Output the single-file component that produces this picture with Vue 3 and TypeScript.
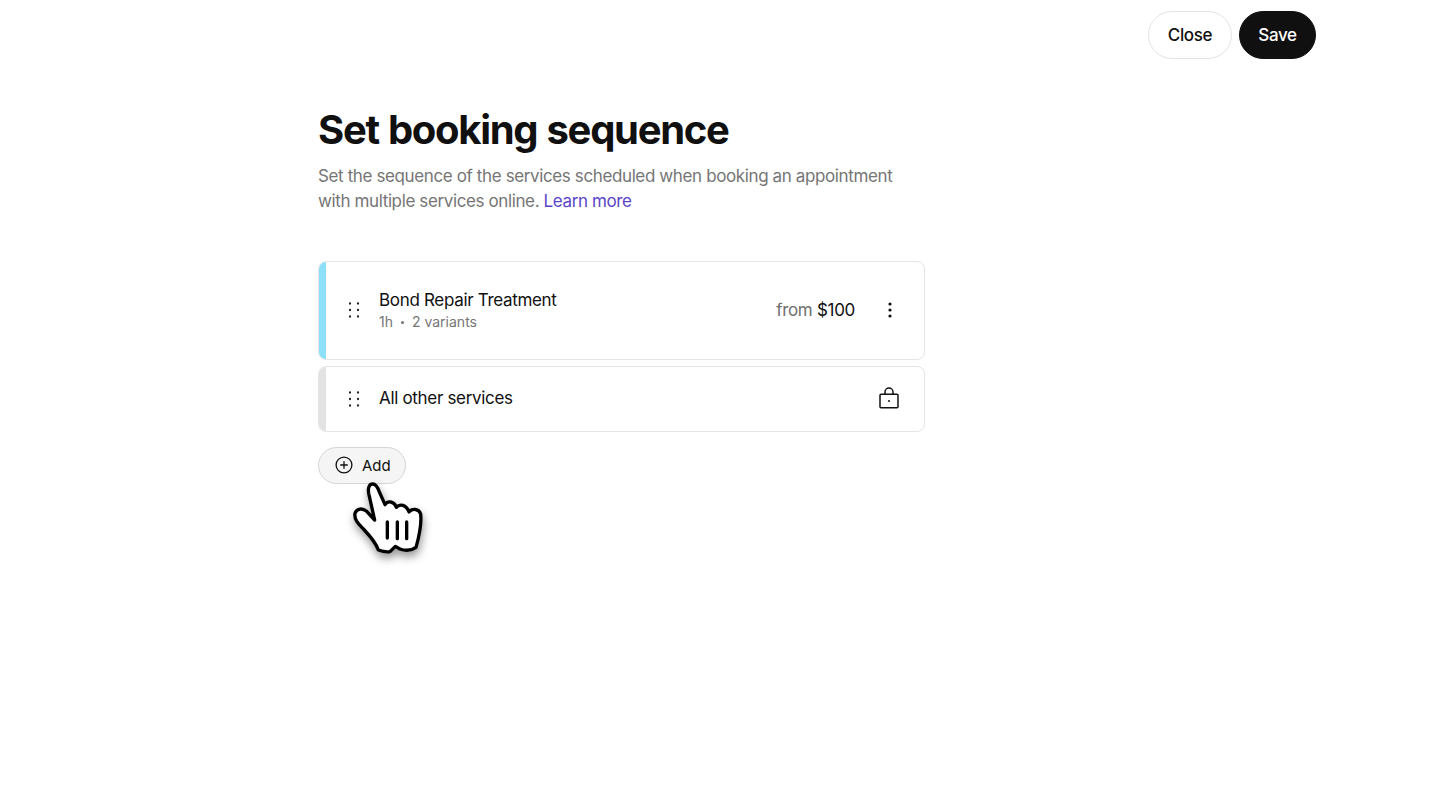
<script setup lang="ts">
interface ServiceRow {
  name: string
}
const other: ServiceRow = { name: 'All other services' }
const dots: number[][] = [[1, 1.5], [9, 1.5], [1, 8], [9, 8], [1, 14.5], [9, 14.5]]
</script>

<template>
  <div class="page">
    <header class="topbar">
      <button class="btn btn-light">Close</button>
      <button class="btn btn-dark">Save</button>
    </header>
    <main class="content">
      <h1 class="title">Set booking sequence</h1>
      <p class="desc">
        Set the sequence of the services scheduled when booking an appointment<br />
        with multiple services online. <a class="link">Learn more</a>
      </p>
      <div class="list">
        <div class="row row-tall">
          <span class="bar bar-blue"></span>
          <svg class="grip" width="11" height="16" viewBox="0 0 11 16">
            <circle v-for="(d, i) in dots" :key="i" :cx="d[0]" :cy="d[1]" r="1.15" fill="#222" />
          </svg>
          <div class="info">
            <div class="name">Bond Repair Treatment</div>
            <div class="meta"><span>1h</span><span class="dot"></span><span>2 variants</span></div>
          </div>
          <div class="price"><span class="from">from</span> $100</div>
          <svg class="more" width="4" height="16" viewBox="0 0 4 16">
            <circle cx="2" cy="2" r="1.6" fill="#111" />
            <circle cx="2" cy="8" r="1.6" fill="#111" />
            <circle cx="2" cy="14" r="1.6" fill="#111" />
          </svg>
        </div>
        <div class="row row-short">
          <span class="bar bar-grey"></span>
          <svg class="grip" width="11" height="16" viewBox="0 0 11 16">
            <circle v-for="(d, i) in dots" :key="i" :cx="d[0]" :cy="d[1]" r="1.15" fill="#222" />
          </svg>
          <div class="info"><div class="name name-single">{{ other.name }}</div></div>
          <svg class="lock" width="20" height="22" viewBox="0 0 20 22" fill="none" stroke="#111" stroke-width="1.5">
            <rect x="1" y="7.2" width="18" height="13.6" rx="1" />
            <path d="M6 7V5a4 4 0 0 1 8 0v2" />
            <circle cx="10" cy="14" r="1" fill="#111" stroke="none" />
          </svg>
        </div>
      </div>
      <div class="add-wrap">
        <button class="add">
          <svg width="18" height="18" viewBox="0 0 18 18" fill="none" stroke="#111" stroke-width="1.3">
            <circle cx="9" cy="9" r="7.9" />
            <path d="M9 5.2v7.6M5.2 9h7.6" />
          </svg>
          <span>Add</span>
        </button>
        <svg class="hand" width="130" height="125" viewBox="0 0 390 375">
          <path
            d="M135 220C140 204 158 204 170 214L194 240L176 160C173 142 179 131 189 132C199 133 205 146 209 158L225 194C233 182 251 182 259 202C269 190 289 194 297 216C307 204 327 206 332 222C335 250 327 290 318 322C304 332 284 332 270 327L256 319L240 335C228 337 216 334 205 330C196 305 180 288 163 270C150 256 131 240 135 220Z"
            fill="#fff"
            stroke="#000"
            stroke-width="10"
            stroke-linejoin="round"
          />
          <path d="M232 246V294M262 246V296M290 246V296" stroke="#000" stroke-width="10" stroke-linecap="round" fill="none" />
        </svg>
      </div>
    </main>
  </div>
</template>

<style scoped>
.page {
  position: relative;
  width: 1440px;
  height: 800px;
  background: #fff;
  overflow: hidden;
  font-family: Inter, "Liberation Sans", sans-serif;
  color: #101010;
}
.topbar {
  display: flex;
  justify-content: flex-end;
  gap: 7px;
  padding: 11px 124px 0 0;
}
.btn {
  height: 48px;
  border-radius: 24px;
  font: 500 17px Inter, "Liberation Sans", sans-serif;
  letter-spacing: -0.35px;
  cursor: pointer;
}
.btn-light {
  width: 84px;
  background: #fff;
  border: 1px solid #e4e4e4;
  color: #101010;
}
.btn-dark {
  width: 77px;
  background: #101010;
  border: 1px solid #101010;
  color: #fff;
}
.content {
  width: 607px;
  margin-left: 318px;
  padding-top: 46px;
}
.title {
  margin: 0;
  font-size: 40px;
  line-height: 50px;
  font-weight: 700;
  letter-spacing: -1.3px;
  word-spacing: 1px;
}
.desc {
  margin: 9px 0 0;
  font-size: 17px;
  line-height: 24.5px;
  font-weight: 400;
  color: #757575;
  letter-spacing: -0.38px;
  white-space: nowrap;
}
.link {
  color: #5a45c9;
}
.list {
  display: flex;
  flex-direction: column;
  gap: 6px;
  margin-top: 47.5px;
}
.row {
  box-sizing: border-box;
  display: flex;
  align-items: center;
  border: 1px solid #e5e5e5;
  border-radius: 8px;
  overflow: hidden;
  background: #fff;
}
.row-tall {
  height: 99px;
}
.row-short {
  height: 66px;
}
.bar {
  align-self: stretch;
  width: 8px;
  margin: -1px 0 -1px -1px;
  flex: none;
}
.bar-blue {
  background: #8ee0f8;
}
.bar-grey {
  background: #e3e3e3;
}
.grip {
  margin-left: 23px;
  flex: none;
}
.info {
  margin-left: 19px;
  flex: 1;
}
.name {
  font-size: 17px;
  line-height: 24px;
  letter-spacing: -0.32px;
  color: #101010;
}
.name-single {
  margin-bottom: 1px;
}
.meta {
  display: flex;
  align-items: center;
  font-size: 14px;
  line-height: 20px;
  color: #767676;
}
.dot {
  width: 3px;
  height: 3px;
  margin: 0 8px;
  border-radius: 50%;
  background: #767676;
}
.price {
  font-size: 17px;
  letter-spacing: -0.3px;
  color: #101010;
}
.from {
  color: #6f6f6f;
}
.more {
  margin: 0 32px 0 33px;
  flex: none;
}
.lock {
  margin: 0 25px 2px 0;
  flex: none;
}
.add-wrap {
  position: relative;
  margin-top: 15px;
}
.add {
  display: flex;
  align-items: center;
  gap: 9px;
  width: 88px;
  height: 37px;
  padding: 0 0 0 16px;
  border: 1px solid #d6d6d6;
  border-radius: 19px;
  background: #f5f5f5;
  color: #101010;
  font: 400 15px Inter, "Liberation Sans", sans-serif;
}
.hand {
  position: absolute;
  left: -8px;
  top: -7px;
  filter: drop-shadow(1px 5px 4px rgba(0, 0, 0, 0.4));
  pointer-events: none;
}
</style>
